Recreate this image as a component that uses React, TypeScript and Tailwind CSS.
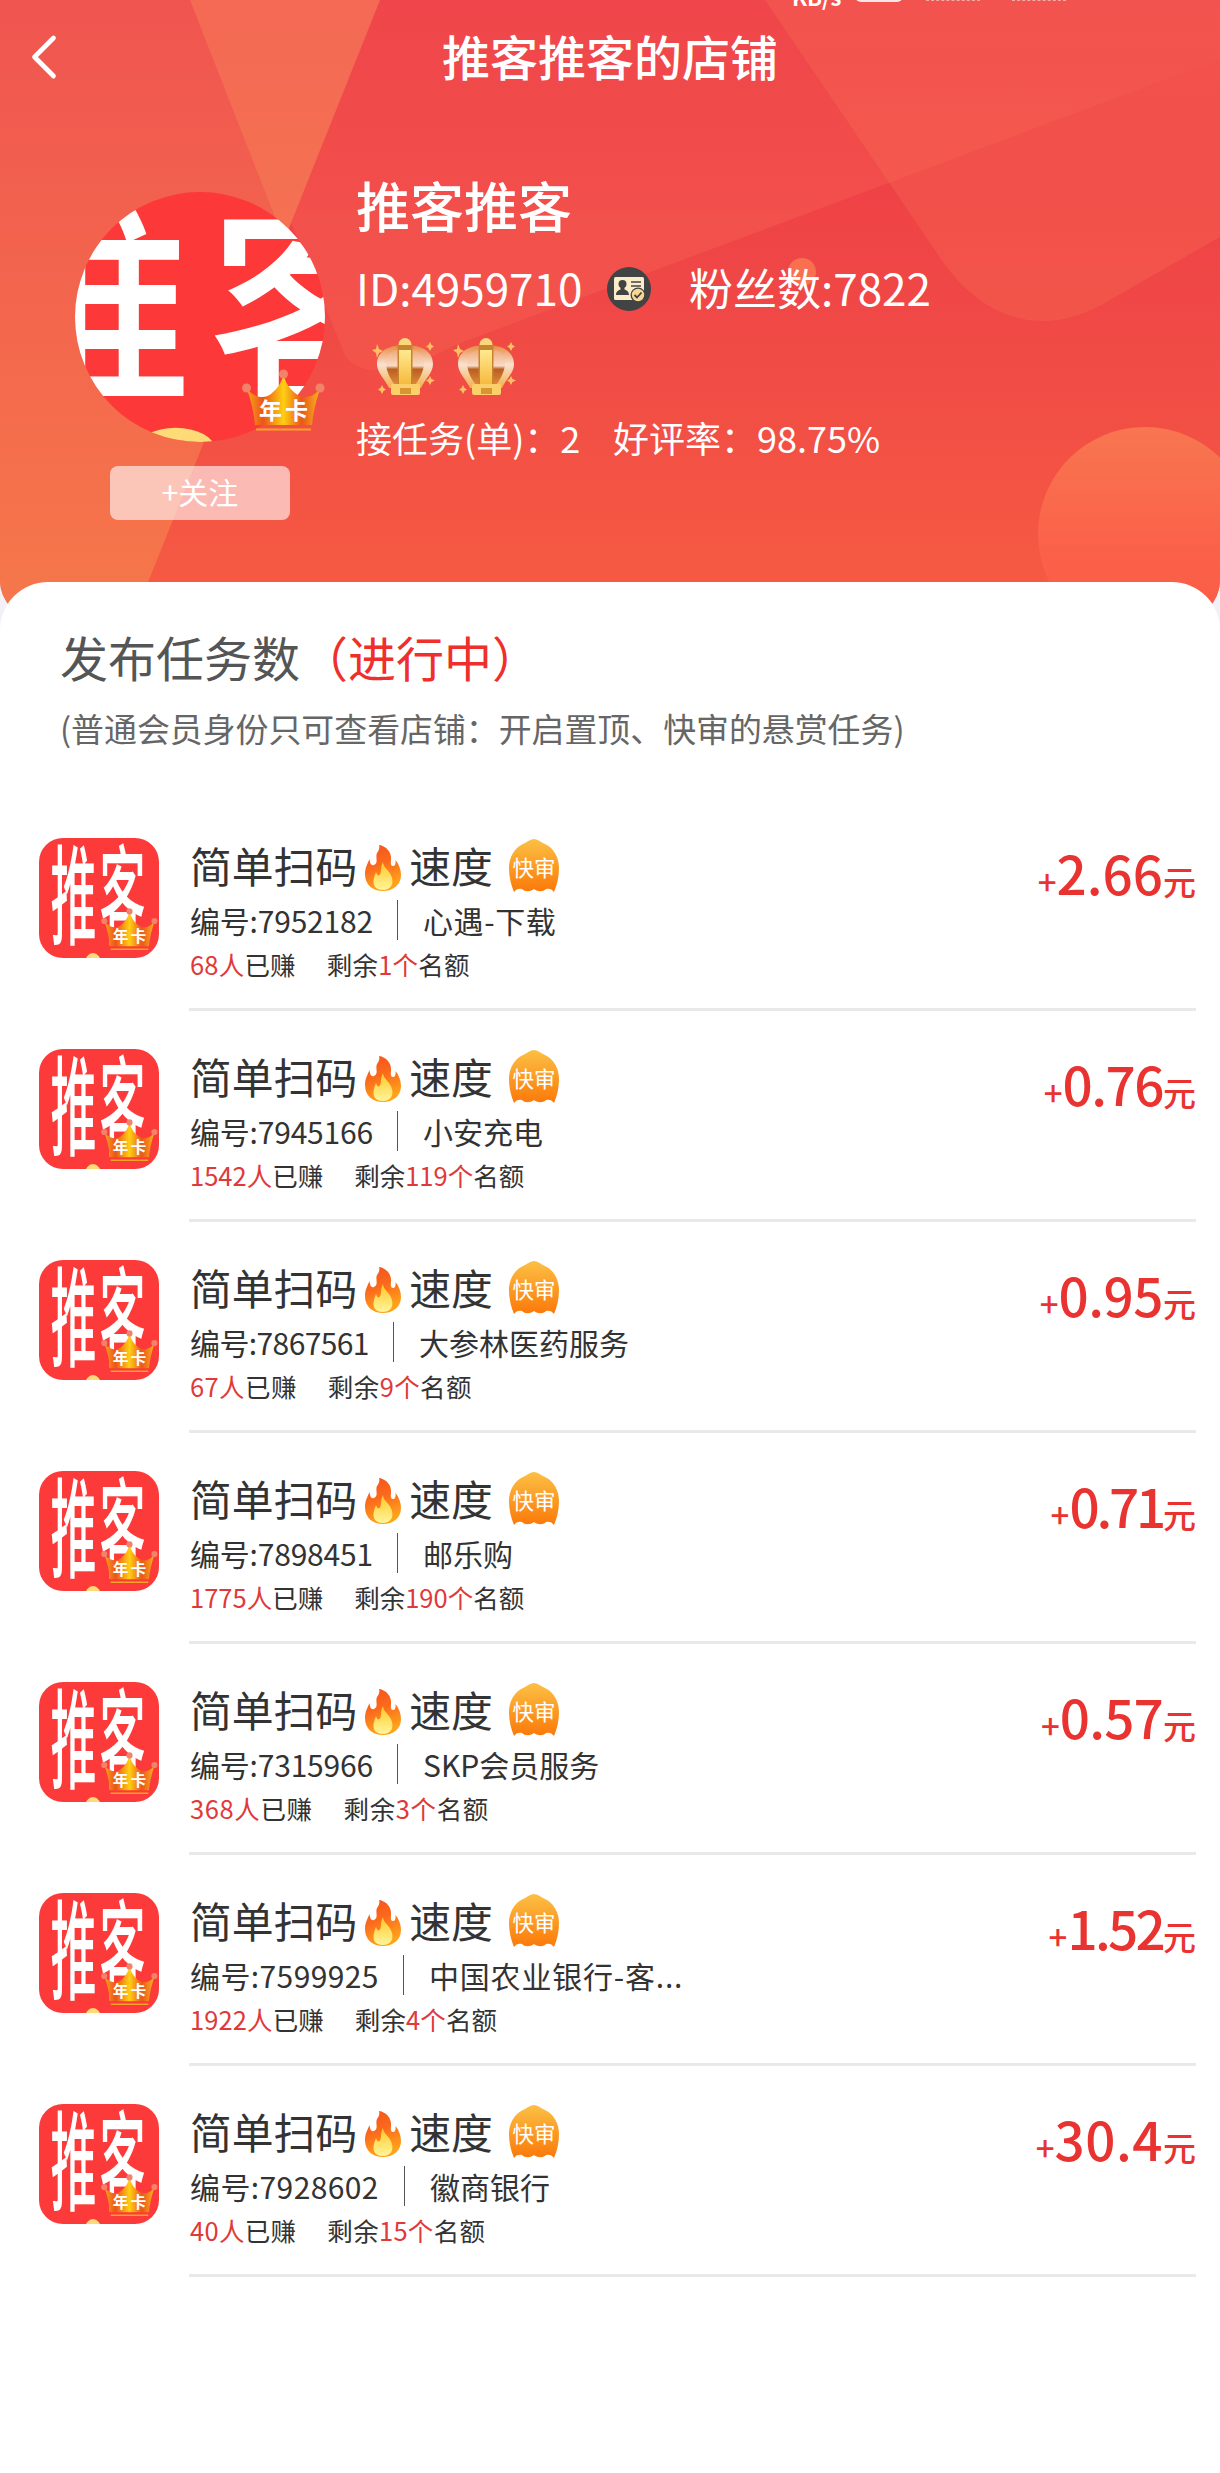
import { ChevronLeft } from "lucide-react";
import clsx from "clsx";

const tasks = [
  { no: "7952182", name: "心遇-下载", earned: 68, left: 1, price: "2.66", noClass: "w-[207px] tracking-[-0.2px]", nameClass: "tracking-[0.6px]", metaClass: "tracking-[0.2px]", priceClass: "tracking-normal" },
  { no: "7945166", name: "小安充电", earned: 1542, left: 119, price: "0.76", noClass: "w-[207px] tracking-[-0.2px]", nameClass: "tracking-normal", metaClass: "tracking-normal", priceClass: "tracking-[-1.5px]" },
  { no: "7867561", name: "大参林医药服务", earned: 67, left: 9, price: "0.95", noClass: "w-[203px] tracking-[-0.6px]", nameClass: "tracking-normal", metaClass: "tracking-[0.4px]", priceClass: "tracking-[-0.5px]" },
  { no: "7898451", name: "邮乐购", earned: 1775, left: 190, price: "0.71", noClass: "w-[207px] tracking-[-0.2px]", nameClass: "tracking-normal", metaClass: "tracking-normal", priceClass: "tracking-[-3.2px]" },
  { no: "7315966", name: "SKP会员服务", earned: 368, left: 3, price: "0.57", noClass: "w-[207px] tracking-[-0.2px]", nameClass: "tracking-normal", metaClass: "tracking-[0.6px]", priceClass: "tracking-[-0.8px]" },
  { no: "7599925", name: "中国农业银行-客...", earned: 1922, left: 4, price: "1.52", noClass: "w-[213px] tracking-[0.4px]", nameClass: "tracking-[0.8px]", metaClass: "tracking-[0.1px]", priceClass: "tracking-[-2.7px]" },
  { no: "7928602", name: "徽商银行", earned: 40, left: 15, price: "30.4", noClass: "w-[214px] tracking-[0.4px]", nameClass: "tracking-normal", metaClass: "tracking-[0.3px]", priceClass: "tracking-[0.5px]" },
];

function LogoArt() {
  return (
    <g>
      <g transform="translate(11.5 98) scale(1 2.36)" fill="#fff" fontSize="46" fontWeight="500">
        <text x="0" y="0">推</text>
        <text x="49" y="0">客</text>
      </g>
      <ellipse cx="54" cy="125" rx="8" ry="10" fill="#fddc78" />
    </g>
  );
}

function YearCrown({ className }: { className?: string }) {
  return (
    <svg viewBox="0 0 83 63" className={className}>
      <defs>
        <linearGradient id="yc" x1="0" x2="1" y1="0" y2="0">
          <stop offset="0" stopColor="#f8a51b" />
          <stop offset="0.22" stopColor="#ec5419" />
          <stop offset="0.5" stopColor="#ffcf12" />
          <stop offset="0.75" stopColor="#e9561b" />
          <stop offset="1" stopColor="#f9b51b" />
        </linearGradient>
      </defs>
      <path d="M5 20C14 30 24 30 30 24C36 19 39 14 41.500 6C44 14 47 19 53 24C60 30 69 30 78 20C74 32 71 44 70 56H13C12 44 9 32 5 20Z" fill="url(#yc)" />
      <path d="M14 60.500H69" stroke="#f7a425" strokeWidth="2" />
      <circle cx="4.500" cy="19" r="4.500" fill="#f3826a" />
      <circle cx="41.500" cy="5" r="4.500" fill="#f3826a" />
      <circle cx="78" cy="19" r="4.500" fill="#f3826a" />
      <text x="17" y="50" fontSize="23" fontWeight="700" fill="#fff" textLength="49">年卡</text>
    </svg>
  );
}

function LevelCrown() {
  return (
    <svg viewBox="0 0 64 58" className="h-[58px] w-16">
      <defs>
        <linearGradient id="lcRim" x1="0" x2="0" y1="0" y2="1">
          <stop offset="0" stopColor="#e98a45" />
          <stop offset="0.45" stopColor="#fbe0cf" />
          <stop offset="1" stopColor="#f2b04b" />
        </linearGradient>
        <linearGradient id="lcIn" x1="0" x2="0" y1="0" y2="1">
          <stop offset="0" stopColor="#f0a878" />
          <stop offset="0.45" stopColor="#f8dcc8" />
          <stop offset="0.55" stopColor="#b95f20" />
          <stop offset="1" stopColor="#e08a3c" />
        </linearGradient>
        <linearGradient id="lcBar" x1="0" x2="0" y1="0" y2="1">
          <stop offset="0" stopColor="#ffe98f" />
          <stop offset="1" stopColor="#f6b93c" />
        </linearGradient>
      </defs>
      <circle cx="33" cy="6.500" r="6.500" fill="#fcd67c" />
      <path d="M33 8C44 6 61 11 61 26C61 35 53 41 49 50H17C13 41 5 35 5 26C5 11 22 6 33 8Z" fill="url(#lcRim)" />
      <path d="M27 12C20 12 13 17 14 26C14.500 34 19 42 23 47H27ZM39 12C46 12 53 17 52 26C51.500 34 47 42 43 47H39Z" fill="url(#lcIn)" />
      <rect x="25.500" y="7" width="15" height="41" fill="#c8842c" />
      <rect x="27" y="12" width="12" height="35" fill="url(#lcBar)" />
      <rect x="19" y="46" width="29" height="11" rx="2" fill="#fbd06a" />
      <rect x="28" y="50" width="11" height="6" fill="#d99531" />
      <g fill="#fbc163">
        <path d="M5 6L7 11L11 13L7 15L5 20L4 15L0 12L4 11Z" />
        <path d="M58 4L59.500 7L62 8.500L59.500 10L58 13L56.500 10L54 8.500L56.500 7Z" />
        <path d="M58 38L59.500 41L63 42.500L59.500 44L58 47L56.500 44L54 42.500L56.500 41Z" />
        <path d="M10 47L11.500 50L14 51.500L11.500 53L10 56L8.500 53L6 51.500L8.500 50Z" />
      </g>
    </svg>
  );
}

function IdBadge() {
  return (
    <svg viewBox="0 0 44 44" className="mt-[3px] size-11">
      <circle cx="22" cy="22" r="22" fill="#414345" />
      <rect x="7" y="10" width="30" height="23" rx="1.500" fill="#fdecc8" />
      <circle cx="15.500" cy="17" r="4" fill="#414345" />
      <path d="M9 28C9 24 12 23 13.500 22.500V19H17.500V22.500C19 23 22 24 22 28Z" fill="#414345" />
      <path d="M24 15H34M24 19H34" stroke="#414345" strokeWidth="1.600" />
      <circle cx="31" cy="28" r="7.500" fill="#414345" />
      <circle cx="31" cy="28" r="6.200" fill="#f8d795" />
      <path d="M27.500 28L30 30.500L34.500 25.500" fill="none" stroke="#414345" strokeWidth="1.800" />
    </svg>
  );
}

function Fire() {
  return (
    <svg viewBox="0 0 36 46" className="h-[46px] w-9">
      <defs>
        <linearGradient id="fo" x1="0" x2="0.3" y1="0" y2="1">
          <stop offset="0" stopColor="#f4511e" />
          <stop offset="0.5" stopColor="#fb6a1c" />
          <stop offset="1" stopColor="#ffa31a" />
        </linearGradient>
        <linearGradient id="fi" x1="0" x2="0" y1="0" y2="1">
          <stop offset="0" stopColor="#ffc928" />
          <stop offset="1" stopColor="#fff59a" />
        </linearGradient>
      </defs>
      <path d="M14 0C21 1 27 7 26 15C25.500 19 26 21 28 21C30 21 31 19 30.500 15C34 19 36 25 36 30C36 40 28 46 18 46C8 46 0 40 0 29C0 22 3 18 4.500 14C5 18 6 21 9 20C14 18 10 12 12 8C14 5 15 3 14 0Z" fill="url(#fo)" />
      <path d="M18 17C18 23 25 25 27 33C29 41 24 45 18 45C11 45 7 41 9 33C9.500 30 10.500 29 11 27C12 30 13 31 14.500 30C17 28 15 22 18 17Z" fill="url(#fi)" />
    </svg>
  );
}

function FastBadge() {
  return (
    <svg viewBox="0 0 50 53" className="ml-4 h-[53px] w-[50px]">
      <defs>
        <linearGradient id="fb" x1="0" x2="0" y1="0" y2="1">
          <stop offset="0" stopColor="#fcc044" />
          <stop offset="1" stopColor="#fb7909" />
        </linearGradient>
      </defs>
      <path d="M25 0C28 0 32 3 36 5C45 9 50 19 50 29C50 38 48 46 45 53C43 50 40 49 37 50C34 53 29 53 25 50C21 53 16 53 13 50C10 49 7 50 5 53C2 46 0 38 0 29C0 19 5 9 14 5C18 3 22 0 25 0Z" fill="url(#fb)" />
      <text x="25" y="37" textAnchor="middle" fontSize="21.500" fill="#fff">快审</text>
    </svg>
  );
}

function HeaderArt() {
  return (
    <svg viewBox="0 0 1220 620" className="absolute inset-0 size-full">
      <defs>
        <linearGradient id="bg" x1="0" x2="0" y1="0" y2="1">
          <stop offset="0" stopColor="#ef464b" />
          <stop offset="0.3" stopColor="#ef4246" />
          <stop offset="0.5" stopColor="#f04846" />
          <stop offset="1" stopColor="#f65c42" />
        </linearGradient>
        <linearGradient id="lf" x1="0" x2="0" y1="0" y2="1">
          <stop offset="0" stopColor="#f05550" />
          <stop offset="1" stopColor="#f6784a" />
        </linearGradient>
        <linearGradient id="fade" x1="0" x2="0" y1="0" y2="1">
          <stop offset="0" stopColor="#ff8060" stopOpacity="0" />
          <stop offset="0.6" stopColor="#ff8060" stopOpacity="0.22" />
          <stop offset="1" stopColor="#ff8060" stopOpacity="0.16" />
        </linearGradient>
        <linearGradient id="ball" x1="0" x2="0" y1="0" y2="1">
          <stop offset="0" stopColor="#f87650" />
          <stop offset="0.6" stopColor="#fb6049" />
          <stop offset="1" stopColor="#f95c45" />
        </linearGradient>
      </defs>
      <rect width="1220" height="620" fill="url(#bg)" />
      <path d="M380 0H1220V59L455 345Q370 390 345 355L290 220Z" fill="url(#fade)" />
      <path d="M765 0L945 265C990 325 1050 337 1110 300L1220 237V0Z" fill="#fa7c58" fillOpacity="0.24" />
      <path d="M0 0H380L133 620H0Z" fill="url(#lf)" />
      <path d="M190 0H380L284 240Z" fill="#f98a5a" fillOpacity="0.4" />
      <circle cx="802" cy="272" r="14" fill="#f8704f" />
      <circle cx="1145" cy="534" r="107" fill="url(#ball)" />
    </svg>
  );
}

function Header() {
  return (
    <header className="relative h-[620px] overflow-hidden rounded-b-[40px] text-white">
      <HeaderArt />
      {/* tail of the status bar */}
      <div className="absolute -top-[16px] left-[792px] flex text-[22px] leading-6 font-bold">
        <span className="w-[63px]">KB/s</span>
        <span className="h-[18px] w-12 rounded-md bg-white/85" />
      </div>
      <div className="absolute top-0 left-[926px] flex gap-8">
        <span className="w-[54px] border-t border-dashed border-white/50" />
        <span className="w-[54px] border-t border-dashed border-white/50" />
      </div>

      <nav className="relative flex h-[110px] items-center justify-center">
        <ChevronLeft className="absolute top-[19px] left-[6px] size-[76px]" strokeWidth={1.5} />
        <h1 className="text-[48px] leading-[60px] font-medium">推客推客的店铺</h1>
      </nav>

      <div className="relative flex items-start gap-[31px] pl-[75px]">
        <div className="flex flex-col items-center pt-[82px]">
          <div className="relative size-[250px]">
            <svg viewBox="0 0 250 250" className="size-full overflow-hidden rounded-full bg-[#fd3838]">
              <g transform="translate(-164 -4.500) scale(4.900 2.090)">
                <LogoArt />
              </g>
            </svg>
            <YearCrown className="absolute top-[177px] left-[167px] h-[63px] w-[83px]" />
          </div>
          <button className="mt-6 h-[54px] w-[180px] rounded-lg bg-white/60 pb-1 text-[30px] text-white">+关注</button>
        </div>

        <div className="pt-[65px]">
          <h2 className="text-[54px] leading-[60px] font-medium">推客推客</h2>
          <div className="mt-[22px] flex items-center text-[44px] leading-[60px] whitespace-nowrap">
            <span className="w-[251px]">ID:4959710</span>
            <IdBadge />
            <span className="ml-[38px]">粉丝数:7822</span>
          </div>
          <div className="mt-[21px] flex gap-[17px] pl-4">
            <LevelCrown />
            <LevelCrown />
          </div>
          <div className="mt-[17px] flex text-[36px] leading-[48px] whitespace-nowrap">
            <span className="w-[257px]">接任务(单)：2</span>
            <span>好评率：98.75%</span>
          </div>
        </div>
      </div>
    </header>
  );
}

export default function App() {
  return (
    <div
      lang="zh-CN"
      className="min-h-[2473px] w-[1220px] overflow-hidden bg-[#f1f1f6] font-['Noto_Sans_CJK_SC',sans-serif] text-[#333]"
    >
      <Header />
      <main className="relative -mt-[38px] min-h-[1891px] rounded-t-[48px] bg-white pt-11">
        <div className="pl-[60px] whitespace-nowrap">
          <h3 className="text-[48px] leading-[60px] text-[#555]">
            发布任务数<span className="text-[#ee2f2b]">（进行中）</span>
          </h3>
          <p className="mt-5 text-[32.900px] leading-[44px] text-[#666]">
            (普通会员身份只可查看店铺：开启置顶、快审的悬赏任务)
          </p>
        </div>

        <ul className="mt-[50px]">
          {tasks.map((t) => (
            <li key={t.no} className="flex h-[211px] pr-6 pl-[39px]">
              <div className="relative mt-[38px] size-[120px] shrink-0">
                <svg viewBox="0 0 120 120" className="size-full overflow-hidden rounded-[24px] bg-[#fd3a3a]">
                  <LogoArt />
                </svg>
                <YearCrown className="absolute top-[70px] left-[62px] h-[43px] w-[57px]" />
              </div>
              <div className="ml-[30px] flex grow justify-between border-b-[3px] border-[#e9e9e9]">
                <div className="pt-[41px] pl-px whitespace-nowrap">
                  <div className="flex h-12 items-center text-[41.800px] leading-[48px]">
                    <span>简单扫码</span>
                    <span className="flex w-[52px] justify-center pt-1.5">
                      <Fire />
                    </span>
                    <span>速度</span>
                    <FastBadge />
                  </div>
                  <div className="mt-[10px] flex h-[42px] items-center text-[30px] leading-[42px]">
                    <span className={clsx("shrink-0", t.noClass)}>编号:{t.no}</span>
                    <span className="h-10 w-px bg-[#555]" />
                    <span className={clsx("pl-[25px]", t.nameClass)}>{t.name}</span>
                  </div>
                  <div className={clsx("mt-[6px] flex gap-[31px] text-[25.500px] leading-[34px]", t.metaClass)}>
                    <span>
                      <span className="text-[#e0393a]">{t.earned}人</span>已赚
                    </span>
                    <span>
                      剩余<span className="text-[#e0393a]">{t.left}个</span>名额
                    </span>
                  </div>
                </div>
                <div className="flex h-fit items-baseline pt-[44px] text-[33px] font-medium text-[#e93331]">
                  <span>+</span>
                  <span className={clsx("text-[53px] leading-[56px]", t.priceClass)}>{t.price}</span>
                  <span>元</span>
                </div>
              </div>
            </li>
          ))}
        </ul>
      </main>
    </div>
  );
}
